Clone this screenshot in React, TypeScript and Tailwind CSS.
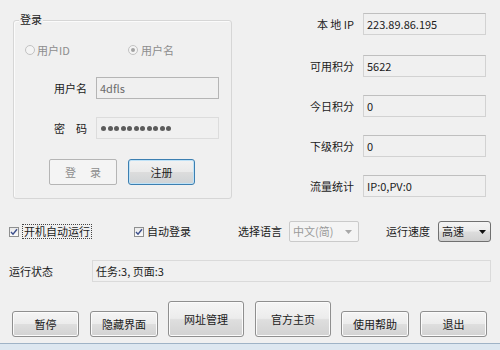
import React from "react";

const btn =
  "flex items-center justify-center rounded-[3px] border border-[#8f8f8f] bg-[linear-gradient(#f5f5f5_0%,#ececec_48%,#dedede_52%,#d2d2d2_100%)] shadow-[inset_0_0_0_1px_#fbfbfb] text-[#1b1b1b]";

function Check() {
  return (
    <div className="w-[10px] h-[10px] border border-[#8e8f8f] bg-[linear-gradient(#eaeaea,#fafafa)] flex items-center justify-center">
      <svg width="8" height="8" viewBox="0 0 8 8">
        <path d="M1 4 L3 6.2 L7 1.2" fill="none" stroke="#3c4f8c" strokeWidth="1.4" />
      </svg>
    </div>
  );
}

function Radio({ checked }: { checked?: boolean }) {
  return (
    <div className="w-[10px] h-[10px] rounded-full border border-[#c2c2c2] bg-[#f4f4f4] flex items-center justify-center">
      {checked && <div className="w-[4px] h-[4px] rounded-full bg-[#a3a3a3]" />}
    </div>
  );
}

function Arrow({ color }: { color: string }) {
  return (
    <svg width="7" height="4" viewBox="0 0 7 4">
      <polygon points="0,0 7,0 3.5,4" fill={color} />
    </svg>
  );
}

function InfoRow({ label, value, mt }: { label: string; value: string; mt: string }) {
  return (
    <div className={`flex items-center h-[22px] ${mt}`}>
      <span className="w-[50px] text-right whitespace-pre">{label}</span>
      <div className="ml-[9px] w-[123px] h-[22px] border border-[#d2d2d2] border-t-[#bfbfbf] bg-[#f0f0f0] flex items-center pl-[3px]">
        {value}
      </div>
    </div>
  );
}

export default function App() {
  return (
    <div className="w-[500px] h-[350px] bg-[#f0f0f0] flex flex-col font-['Noto_Sans_CJK_SC',sans-serif] text-[11px] text-[#1b1b1b] leading-none overflow-hidden">
      {/* top section */}
      <div className="flex items-start h-[199px] shrink-0">
        <div className="relative ml-[13px] mt-[20px] w-[219px] h-[179px] border border-[#d6d6d6] rounded-[3px] flex flex-col shadow-[inset_1px_1px_0_#fbfbfb]">
          <span className="absolute left-[5px] top-[-7px] px-[1px] bg-[#f0f0f0]">登录</span>
          <div className="mt-[22px] h-[14px] flex items-center pl-[11px] text-[#8d8d8d]">
            <div className="w-[103px] flex items-center gap-[2px]">
              <Radio />
              <span>用户ID</span>
            </div>
            <div className="flex items-center gap-[3px]">
              <Radio checked />
              <span>用户名</span>
            </div>
          </div>
          <div className="mt-[20px] flex items-center h-[22px]">
            <span className="ml-[40px] w-[33px] whitespace-nowrap">用户名</span>
            <div className="ml-[9px] w-[123px] h-[22px] border border-[#b5b5b5] bg-[#f0f0f0] flex items-center pl-[3px] text-[#6a6a6a]">
              4dfls
            </div>
          </div>
          <div className="mt-[18px] flex items-center h-[22px]">
            <span className="ml-[40px] w-[33px] flex justify-between">
              <span>密</span>
              <span>码</span>
            </span>
            <div className="ml-[9px] w-[123px] h-[22px] border border-[#dcdcdc] bg-[#f0f0f0] flex items-center pl-[4px] gap-[1.5px]">
              {Array.from({ length: 11 }).map((_, i) => (
                <div key={i} className="w-[5px] h-[5px] rounded-full bg-[#5c5c5c]" />
              ))}
            </div>
          </div>
          <div className="mt-[20px] flex">
            <div className="ml-[35px] w-[68px] h-[26px] rounded-[2px] border border-[#b5b5b5] bg-[#f4f4f4] flex items-center justify-center gap-[14px] text-[#8d8d8d]">
              <span>登</span>
              <span>录</span>
            </div>
            <div className="ml-[11px] w-[67px] h-[26px] rounded-[3px] border border-[#3c7fb1] bg-[linear-gradient(#f2f2f2_0%,#eaeaea_48%,#dcdcdc_52%,#cfd3d6_100%)] shadow-[inset_0_0_0_1px_#bfe2f7] flex items-center justify-center">
              注册
            </div>
          </div>
        </div>
        <div className="ml-[72px] mt-[13px] flex flex-col">
          <InfoRow mt="" label="本 地 IP" value="223.89.86.195" />
          <InfoRow mt="mt-[20px]" label="可用积分" value="5622" />
          <InfoRow mt="mt-[18px]" label="今日积分" value="0" />
          <InfoRow mt="mt-[18px]" label="下级积分" value="0" />
          <InfoRow mt="mt-[18px]" label="流量统计" value="IP:0,PV:0" />
        </div>
      </div>

      {/* options row */}
      <div className="mt-[22px] h-[21px] flex items-center pl-[9px] shrink-0">
        <div className="w-[125px] flex items-center">
          <Check />
          <span className="ml-[3px] h-[15px] px-[1px] border border-dotted border-[#444] flex items-center">开机自动运行</span>
        </div>
        <div className="w-[104px] flex items-center">
          <Check />
          <span className="ml-[3px]">自动登录</span>
        </div>
        <span className="w-[51px]">选择语言</span>
        <div className="w-[70px] h-[21px] rounded-[2px] border border-[#cacaca] bg-[#f4f4f4] flex items-center justify-between pl-[3px] pr-[6px] text-[#9a9a9a]">
          <span>中文(简)</span>
          <Arrow color="#a8a8a8" />
        </div>
        <span className="ml-[27px] w-[52px]">运行速度</span>
        <div className="w-[53px] h-[21px] rounded-[3px] border border-[#707070] bg-[linear-gradient(#f4f4f4_0%,#ebebeb_48%,#dddddd_52%,#d0d0d0_100%)] flex items-center justify-between pl-[3px] pr-[4px]">
          <span>高速</span>
          <Arrow color="#111" />
        </div>
      </div>

      {/* status row */}
      <div className="mt-[18px] h-[22px] flex items-center pl-[9px] shrink-0">
        <span className="w-[83px]">运行状态</span>
        <div className="w-[399px] h-[22px] border border-[#dadada] bg-[#f0f0f0] flex items-center pl-[3px]">
          任务:3, 页面:3
        </div>
      </div>

      {/* buttons */}
      <div className="mt-[19px] h-[36px] flex items-end pl-[12px] shrink-0">
        <div className={`${btn} w-[67px] h-[26px]`}>暂停</div>
        <div className={`${btn} ml-[11px] w-[68px] h-[26px]`}>隐藏界面</div>
        <div className={`${btn} ml-[10px] w-[76px] h-[36px]`}>网址管理</div>
        <div className={`${btn} ml-[11px] w-[76px] h-[36px]`}>官方主页</div>
        <div className={`${btn} ml-[10px] w-[68px] h-[26px]`}>使用帮助</div>
        <div className={`${btn} ml-[11px] w-[67px] h-[26px]`}>退出</div>
      </div>

      <div className="mt-[6px] flex-1 border-t border-[#9fb3c6] bg-[#dde7f0]" />
    </div>
  );
}
